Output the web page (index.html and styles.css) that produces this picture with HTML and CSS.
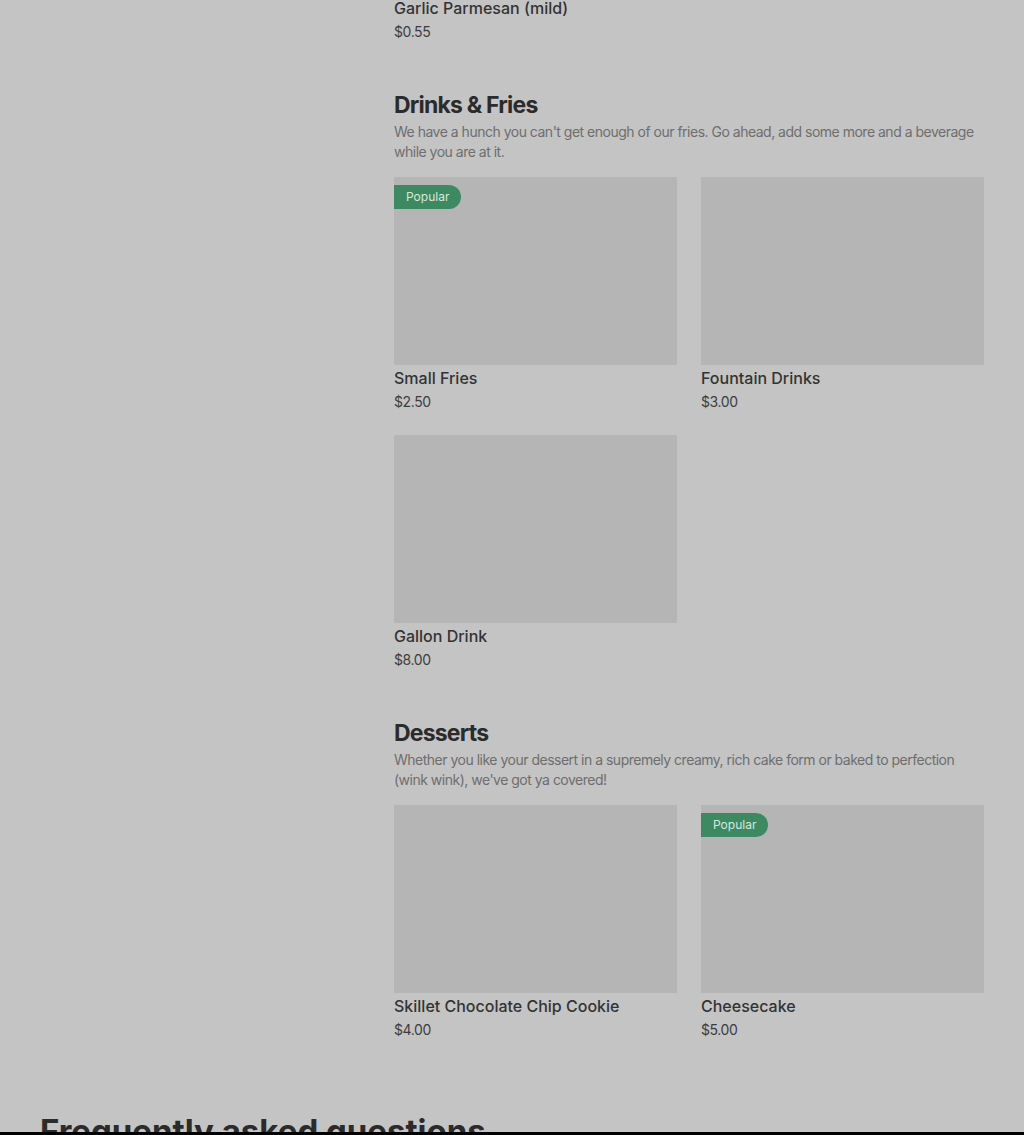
FILE: index.html
```html
<!DOCTYPE html>
<html>
<head>
    <title>Menu</title>
    <link rel="stylesheet" href="styles.css">
</head>
<body>
    <div class="page">
        <div class="sidebar"></div>

        <div class="menu">
            <div class="item item-cut">
                <div class="item-name">Garlic Parmesan (mild)</div>
                <div class="item-price">$0.55</div>
            </div>

            <div class="section">
                <h2>Drinks &amp; Fries</h2>
                <p class="section-desc">We have a hunch you can't get enough of our fries. Go ahead, add some more and a beverage while you are at it.</p>
                <div class="item-grid">
                    <div class="item">
                        <div class="item-image"><span class="badge">Popular</span></div>
                        <div class="item-name">Small Fries</div>
                        <div class="item-price">$2.50</div>
                    </div>
                    <div class="item">
                        <div class="item-image"></div>
                        <div class="item-name">Fountain Drinks</div>
                        <div class="item-price">$3.00</div>
                    </div>
                    <div class="item">
                        <div class="item-image"></div>
                        <div class="item-name">Gallon Drink</div>
                        <div class="item-price">$8.00</div>
                    </div>
                </div>
            </div>

            <div class="section">
                <h2>Desserts</h2>
                <p class="section-desc">Whether you like your dessert in a supremely creamy, rich cake form or baked to perfection (wink wink), we've got ya covered!</p>
                <div class="item-grid">
                    <div class="item">
                        <div class="item-image"></div>
                        <div class="item-name">Skillet Chocolate Chip Cookie</div>
                        <div class="item-price">$4.00</div>
                    </div>
                    <div class="item">
                        <div class="item-image"><span class="badge">Popular</span></div>
                        <div class="item-name">Cheesecake</div>
                        <div class="item-price">$5.00</div>
                    </div>
                </div>
            </div>
        </div>
    </div>

    <div class="faq">
        <h2>Frequently asked questions</h2>
    </div>

    <div class="bottom-bar"></div>
</body>
</html>
```

FILE: styles.css
```css
body {
    margin: 0;
    font-family: Inter, "Liberation Sans", sans-serif;
    background-color: #c4c4c4;
    color: #333333;
    height: 1135px;
    overflow: hidden;
    position: relative;
}
.page {
    display: grid;
    grid-template-columns: 330px 1fr;
    gap: 24px;
    padding: 0 40px;
}
.item-cut {
    margin-top: -4px;
}
.section {
    margin-top: 47px;
}
.section h2 {
    margin: 0;
    font-size: 23px;
    line-height: 32px;
    font-weight: 700;
    color: #2b2b2b;
    letter-spacing: -0.8px;
}
.section-desc {
    margin: 1px 0 15px;
    font-size: 14px;
    line-height: 20px;
    color: #6e6e6e;
    letter-spacing: -0.5px;
}
.item-grid {
    display: grid;
    grid-template-columns: 1fr 1fr;
    column-gap: 24px;
    row-gap: 23px;
}
.item-image {
    height: 188px;
    background-color: #b5b5b5;
    position: relative;
}
.badge {
    position: absolute;
    top: 8px;
    left: 0;
    background-color: #3d8a62;
    color: #d9e6de;
    font-size: 12px;
    line-height: 24px;
    padding: 0 12px;
    border-radius: 0 12px 12px 0;
}
.item-name {
    margin-top: 1px;
    font-size: 16px;
    line-height: 24px;
    font-weight: 500;
    color: #333333;
}
.item-cut .item-name {
    margin-top: 0;
}
.item-price {
    margin-top: 2px;
    font-size: 14px;
    line-height: 20px;
    color: #3d3d3d;
    letter-spacing: -0.4px;
}
.faq {
    padding: 0 40px;
    margin-top: 71px;
}
.faq h2 {
    margin: 0;
    font-size: 33px;
    line-height: 40px;
    font-weight: 700;
    color: #2b2b2b;
}
.bottom-bar {
    position: absolute;
    left: 0;
    right: 0;
    top: 1132px;
    height: 3px;
    background-color: #000000;
}
```
